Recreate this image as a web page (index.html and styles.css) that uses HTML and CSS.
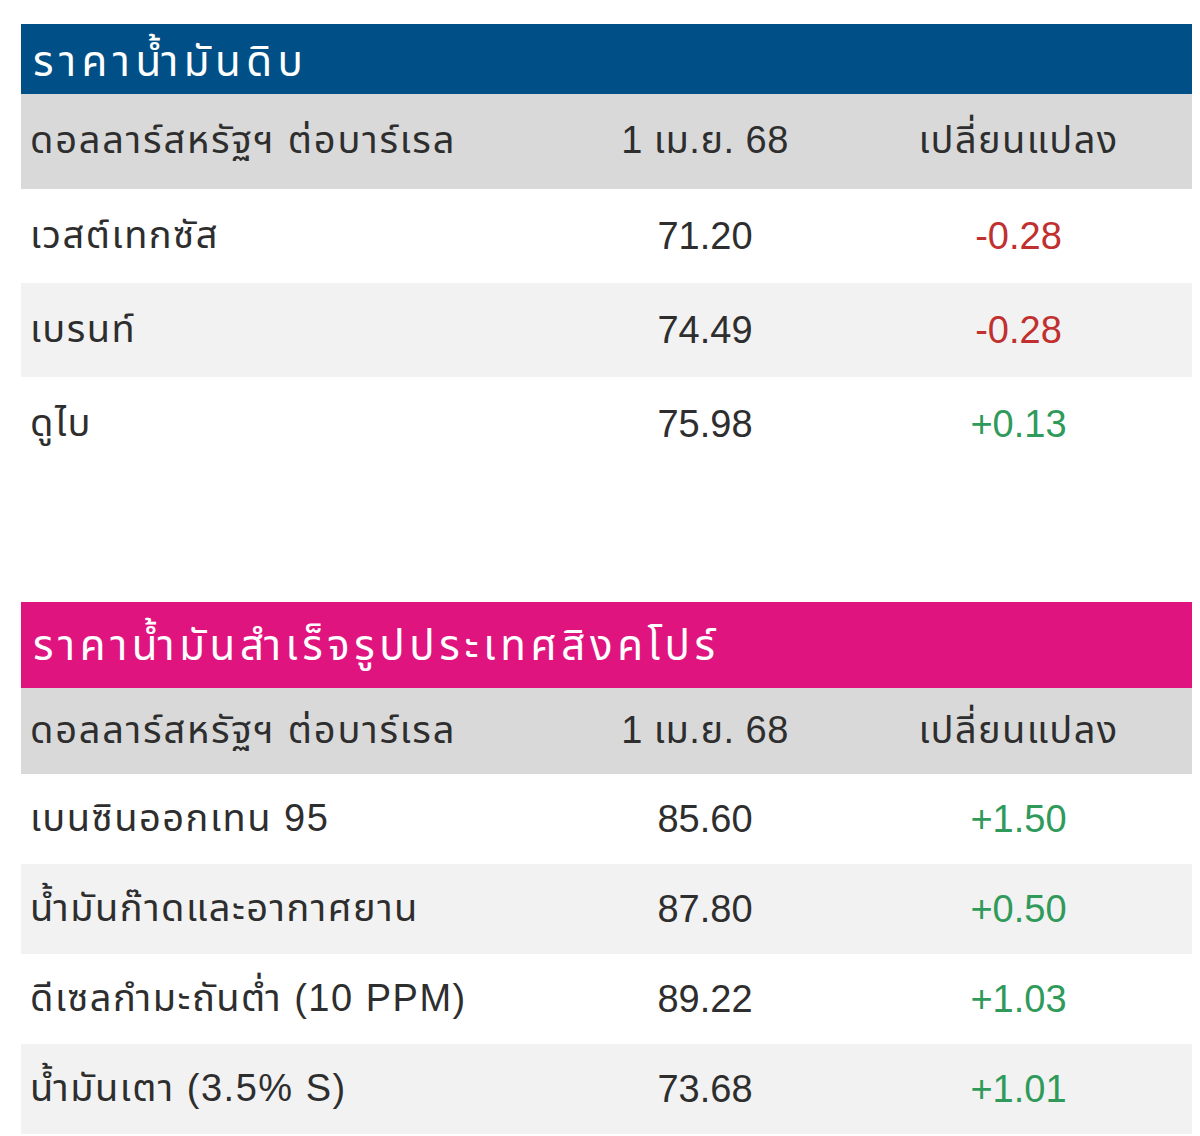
FILE: index.html
```html
<!DOCTYPE html>
<html lang="th">
<head>
<meta charset="utf-8">
<link rel="stylesheet" href="styles.css">
</head>
<body>
<div class="page">
  <section class="panel panel-crude">
    <div class="title title-blue">ราคาน้ำมันดิบ</div>
    <div class="row head">
      <div class="c1">ดอลลาร์สหรัฐฯ ต่อบาร์เรล</div>
      <div class="c2">1 เม.ย. 68</div>
      <div class="c3">เปลี่ยนแปลง</div>
    </div>
    <div class="row">
      <div class="c1">เวสต์เทกซัส</div>
      <div class="c2">71.20</div>
      <div class="c3 down">-0.28</div>
    </div>
    <div class="row alt">
      <div class="c1">เบรนท์</div>
      <div class="c2">74.49</div>
      <div class="c3 down">-0.28</div>
    </div>
    <div class="row">
      <div class="c1">ดูไบ</div>
      <div class="c2">75.98</div>
      <div class="c3 up">+0.13</div>
    </div>
  </section>

  <section class="panel panel-refined">
    <div class="title title-pink">ราคาน้ำมันสำเร็จรูปประเทศสิงคโปร์</div>
    <div class="row head">
      <div class="c1">ดอลลาร์สหรัฐฯ ต่อบาร์เรล</div>
      <div class="c2">1 เม.ย. 68</div>
      <div class="c3">เปลี่ยนแปลง</div>
    </div>
    <div class="row">
      <div class="c1">เบนซินออกเทน 95</div>
      <div class="c2">85.60</div>
      <div class="c3 up">+1.50</div>
    </div>
    <div class="row alt">
      <div class="c1">น้ำมันก๊าดและอากาศยาน</div>
      <div class="c2">87.80</div>
      <div class="c3 up">+0.50</div>
    </div>
    <div class="row">
      <div class="c1">ดีเซลกำมะถันต่ำ (10 PPM)</div>
      <div class="c2">89.22</div>
      <div class="c3 up">+1.03</div>
    </div>
    <div class="row alt">
      <div class="c1">น้ำมันเตา (3.5% S)</div>
      <div class="c2">73.68</div>
      <div class="c3 up">+1.01</div>
    </div>
  </section>
</div>
</body>
</html>
```

FILE: styles.css
```css
html, body {
  margin: 0;
  padding: 0;
  background: #ffffff;
}

body {
  font-family: "Liberation Sans", "Noto Sans Thai", "DejaVu Sans", sans-serif;
  color: #2e2e2e;
  font-size: 38px;
}

.page {
  padding: 24px 8px 0 21px;
  display: flex;
  flex-direction: column;
  gap: 131px;
}

.panel {
  display: flex;
  flex-direction: column;
}

.title {
  color: #ffffff;
  font-size: 42px;
  letter-spacing: 4.6px;
  padding-left: 12px;
  display: flex;
  align-items: center;
  box-sizing: border-box;
}

.title-blue {
  background: #004f87;
  height: 70px;
  padding-top: 8px;
  letter-spacing: 5.5px;
}

.title-pink {
  background: #e0147f;
  height: 86px;
  padding-top: 4px;
}

.row {
  display: grid;
  grid-template-columns: 544px 280px 1fr;
  align-items: center;
  height: 94px;
}

.panel-refined .row {
  height: 90px;
}

.row.head {
  background: #d9d9d9;
  height: 95px;
}

.panel-refined .row.head {
  height: 86px;
}

.row.alt {
  background: #f2f2f2;
}

.c1 {
  padding-left: 9px;
  white-space: nowrap;
  letter-spacing: 1.5px;
}

.head .c1 {
  letter-spacing: 1.8px;
}

.c2, .c3 {
  text-align: center;
  white-space: nowrap;
}

.head .c2 {
  letter-spacing: 0.5px;
}

.head .c3 {
  letter-spacing: 1.4px;
}

.down {
  color: #c0302f;
}

.up {
  color: #2f9a5a;
}
```
